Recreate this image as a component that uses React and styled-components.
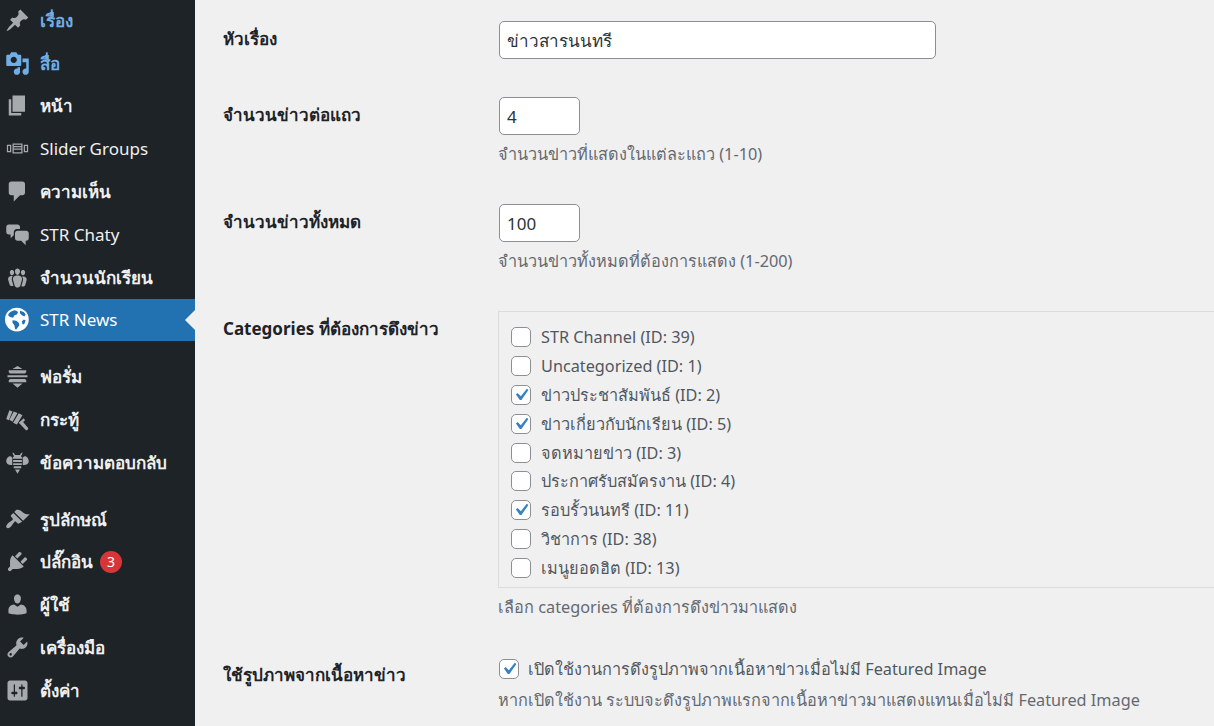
import React from 'react';
import styled, { createGlobalStyle } from 'styled-components';

const Global = createGlobalStyle`
  html, body { margin: 0; padding: 0; height: 100%; overflow: hidden; background: #f0f0f1; }
  body { font-family: "Noto Sans", "Open Sans", "DejaVu Sans", sans-serif; }
  * { box-sizing: border-box; }
`;

const Page = styled.div`
  display: flex;
  width: 1214px;
  height: 726px;
  overflow: hidden;
`;
const Sidebar = styled.nav`
  flex: 0 0 195px;
  background: #1d2327;
  height: 100%;
  margin-top: 0;
`;
const Menu = styled.ul`
  list-style: none;
  margin: -1px 0 14px;
  padding: 0;
  & + & { margin-top: 0; }
`;
const Item = styled.li`
  position: relative;
  display: flex;
  align-items: center;
  height: 42.8px;
  font-size: 17px;
  font-weight: ${p => (p.$thai ? 600 : 400)};
  color: ${p => (p.$posts ? '#72aee6' : '#f0f0f1')};
  background: ${p => (p.$active ? '#2271b1' : 'transparent')};
  ${p => p.$active && 'color: #fff;'}
`;
const IconSlot = styled.span`
  flex: 0 0 40px;
  display: flex;
  align-items: center;
  padding-left: 5px;
  color: ${p => p.$color || '#a7aaad'};
`;
const Arrow = styled.span`
  position: absolute;
  right: 0;
  top: 50%;
  margin-top: -10px;
  border: 10px solid transparent;
  border-right-color: #f0f0f1;
  border-left-width: 0;
`;
const Badge = styled.span`
  display: inline-flex;
  align-items: center;
  justify-content: center;
  width: 22px;
  height: 22px;
  margin-left: 7px;
  border-radius: 50%;
  background: #d63638;
  color: #fff;
  font-size: 14px;
  font-weight: 400;
`;
const Main = styled.main`
  flex: 1;
  min-width: 0;
  padding: 2px 0 0 28px;
  overflow: hidden;
`;
const Row = styled.section`
  display: grid;
  grid-template-columns: 275px 1fr;
  padding: 19px 0;
`;
const Label = styled.div`
  font-size: 17px;
  font-weight: 700;
  line-height: 24px;
  color: #1d2327;
  padding-top: ${p => p.$top || '6px'};
`;
const Field = styled.div`
  min-width: 0;
`;
const TextInput = styled.input`
  display: block;
  margin-left: 1px;
  width: ${p => p.$w};
  height: 38px;
  padding: 0 7px;
  border: 1px solid #8c8f94;
  border-radius: 5px;
  background: #fff;
  color: #2c3338;
  font: 400 17px "Noto Sans", "DejaVu Sans", sans-serif;
`;
const Help = styled.p`
  margin: ${p => p.$m || '7px 0 0'};
  font-size: 16.25px;
  line-height: 24px;
  color: #646970;
  white-space: nowrap;
`;
const CatBox = styled.div`
  width: 900px;
  height: 277px;
  border: 1px solid #dcdcde;
  padding: 11px 0 0 12px;
`;
const Check = styled.label`
  display: flex;
  align-items: center;
  gap: 10px;
  height: 28.8px;
  font-size: 16.25px;
  color: #50575e;
  white-space: nowrap;
`;
const Toggle = styled(Check)`
  margin-left: 1px;
  height: 24px;
  gap: 9px;
`;
const Box = styled.span`
  flex: 0 0 20px;
  width: 20px;
  height: 20px;
  border: 1px solid #8c8f94;
  border-radius: 5px;
  background: #fff;
  display: flex;
  color: #3582c4;
`;

const Ico = ({ d, size = 25 }) => (
  <svg width={size} height={size} viewBox="0 0 20 20" fill="currentColor"><path d={d} /></svg>
);

const P = {
  pin: 'M10.44 3.02l1.82-1.82 6.36 6.35-1.83 1.82c-1.05-.68-2.48-.57-3.41.36l-.75.75c-.92.93-1.04 2.35-.35 3.41l-1.83 1.82-2.41-2.41-2.8 2.79c-.42.42-3.38 2.71-3.8 2.29s1.86-3.39 2.28-3.81l2.79-2.79L4.1 9.36l1.83-1.82c1.05.69 2.48.57 3.4-.36l.75-.75c.93-.92 1.05-2.35.36-3.41z',
  media: 'M13 11V4c0-.55-.45-1-1-1h-1.67L9 1H5L3.67 3H2c-.55 0-1 .45-1 1v7c0 .55.45 1 1 1h10c.55 0 1-.45 1-1zM7 4.5c1.38 0 2.5 1.12 2.5 2.5S8.38 9.5 7 9.5 4.5 8.38 4.5 7 5.62 4.5 7 4.5zM14 6h5v10.5c0 1.38-1.12 2.5-2.5 2.5S14 17.88 14 16.5s1.12-2.5 2.5-2.5c.17 0 .34.02.5.05V9h-3V6zm-4 8.05V13h2v3.5c0 1.38-1.12 2.5-2.5 2.5S7 17.88 7 16.5 8.12 14 9.5 14c.17 0 .34.02.5.05z',
  page: 'M6 15V2h10v13H6zm-1 1h8v2H3V5h2v11z',
  slider: 'M6 6h8v8H6zM7 7v1h6V7zm0 2v1h6V9zm0 2v2h6v-2zM1.5 7H5v6H1.500zM15 7h3.500v6H15zM2.500 8v4h1.500V8zM16 8v4h1.500V8z',
  comment: 'M5 2h9c1.1 0 2 .9 2 2v7c0 1.1-.9 2-2 2h-2l-5 5v-5H5c-1.1 0-2-.9-2-2V4c0-1.1.9-2 2-2z',
  chat: 'M3 2h7c1.100 0 2 .9 2 2v1.500H9.500C8.100 5.500 7 6.600 7 8v2.500L4.500 13v-3H3c-1.100 0-2-.9-2-2V4c0-1.100.9-2 2-2zM10 7h7c1 0 2 .9 2 2v4c0 1.100-.9 2-2 2h-.5v3.500L13 15h-3c-1.100 0-2-.9-2-2V9c0-1.100.9-2 2-2z',
  groups: 'M8.030 4.460c-.29 1.280.55 3.460 1.970 3.460 1.410 0 2.250-2.180 1.960-3.460-.22-.98-1.080-1.620-1.960-1.620-.89 0-1.740.64-1.970 1.620zm-4.130.9c-.25 1.080.47 2.930 1.670 2.930s1.920-1.850 1.670-2.930c-.19-.83-.92-1.380-1.670-1.380s-1.480.55-1.670 1.380zm8.860 0c-.25 1.080.47 2.930 1.660 2.930 1.200 0 1.920-1.850 1.670-2.930-.19-.83-.92-1.380-1.670-1.380-.74 0-1.470.55-1.660 1.380zm-.59 11.430l1.250-4.300C14.200 10 12.710 8.470 10 8.470c-2.720 0-4.210 1.530-3.440 4.020l1.260 4.300C8.050 17.510 9 18 10 18c.98 0 1.940-.49 2.170-1.210zm-6.100-7.630c-.49.67-.96 1.830-.42 3.590l1.120 3.790c-.34.2-.77.31-1.200.31-.85 0-1.650-.41-1.850-1.030l-1.070-3.650c-.65-2.110.61-3.410 2.920-3.410.19 0 .35.01.5.03zm7.700 0c.15-.02.31-.03.5-.03 2.310 0 3.570 1.300 2.920 3.410l-1.070 3.650c-.2.62-1 1.030-1.850 1.030-.43 0-.86-.11-1.200-.31l1.120-3.790c.54-1.760.07-2.920-.42-3.590z',
  globe: 'M9.500 0.500a9.500 9.500 0 1 0 0 19 9.500 9.500 0 0 0 0-19zM5 3.500l2.500-1 1.500.5 1.500 1-1 2-2 .5-1 2-2.500-.5-1.500-1.500C2.800 5.200 3.700 4.200 5 3.500zm7-.5l3 1 1.500 2-1 1.500-2-1-1.500-1.500zM6 10.500l3 .5 2 1.500 .5 2-1.500 2-1 1.500-1-.5-.5-3-1.500-2zm9-.5l1.500 .5-1 3-1.500 .5-.5-2.500z',
  hive: 'M10 1.500l4 2.500H6zM3 5h14v1.500l-1 1H4l-1-1zM2 9h16v1.500H2zM4 12h12l1 1v1.500H3V13zM6 15.500h8L10 19z',
  hammer: 'M3.500 2.500l2.500 1-3 7-2-1zM7 3.500l3 1.200-4 7-2.500-1.500zM11 5l3 1.500-4.500 7.500-3-1.500zM15 9l-4 3.500 1 1 4.800 5c.8.4 2-.5 1.700-1.700L14.500 12l1.500-1.500z',
  bee: 'M6 2c1 0 1.500 1 2 2h4c.5-1 1-2 2-2-.2 1-.5 2-1.300 3 .8.500 1.300 1.200 1.300 2H6c0-.8.5-1.500 1.300-2C6.500 4 6.200 3 6 2zM4 5c1.300 0 1.800 1 1.800 2.500V12C3 12.500 1 11 1 9c0-2 1.500-4 3-4zm12 0c1.500 0 3 2 3 4 0 2-2 3.500-4.800 3V7.500C14.200 6 14.700 5 16 5zM6.500 8h7v1.500h-7zm0 2.500h7V12h-7zM7 13h6v1.500H7zM8 15.500h4L10 19z',
  brush: 'M14.480 11.060L7.410 3.990l1.500-1.500c.5-.56 2.300-.47 3.510.32 1.210.8 1.430 1.280 2.910 2.100 1.180.64 2.450 1.260 4.450.85zm-.71.71L6.700 4.700 4.930 6.470c-.39.39-.39 1.020 0 1.410l1.060 1.060c.39.39.39 1.030 0 1.420-.6.6-1.430 1.150-2.210 1.700-.79.560-1.500 1.100-2 1.700-.85.95-1.100 2.200-.45 2.850.65.650 1.850.4 2.800-.45.6-.5 1.150-1.200 1.700-2 .55-.8 1.100-1.600 1.700-2.200.39-.39 1.030-.39 1.420 0l1.060 1.060c.39.39 1.020.39 1.410 0z',
  plug: 'M13.110 4.360L9.870 7.600 8 5.730l3.240-3.240c.35-.34 1.050-.2 1.560.32.52.51.66 1.210.31 1.550zm-8 1.770l.91-1.120 9.010 9.010-1.190.84c-.71.71-2.630 1.160-3.820 1.160H6.140L4.900 17.260c-.59.59-1.540.59-2.120 0-.59-.58-.59-1.530 0-2.120l1.240-1.240v-3.880c0-1.130.4-3.190 1.090-3.890zm7.260 3.970l3.240-3.240c.34-.35 1.040-.21 1.550.31.52.51.66 1.210.31 1.550l-3.240 3.250z',
  users: 'M10 9.250c-2.270 0-2.730-3.440-2.730-3.440C7 4.020 7.820 2 9.970 2c2.160 0 2.980 2.020 2.710 3.810 0 0-.41 3.440-2.680 3.440zm0 2.570L12.720 10c2.390 0 4.520 2.330 4.520 4.530v2.490s-3.650 1.130-7.240 1.130c-3.650 0-7.240-1.130-7.240-1.130v-2.490c0-2.250 1.940-4.480 4.470-4.480z',
  tools: 'M16.680 9.770c-1.340 1.340-3.300 1.670-4.950.99l-5.410 6.520c-.99.99-2.590.99-3.580 0s-.99-2.590 0-3.570l6.520-5.420c-.68-1.650-.35-3.610.99-4.950 1.280-1.280 3.120-1.620 4.720-1.060l-2.890 2.890 2.820 2.820 2.860-2.870c.53 1.580.18 3.390-1.080 4.650zM3.810 16.210c.4.39 1.040.39 1.430 0 .4-.4.4-1.040 0-1.430-.39-.4-1.030-.4-1.430 0-.39.39-.39 1.030 0 1.430z',
  settings: 'M18 16V4c0-1.100-.9-2-2-2H4c-1.100 0-2 .9-2 2v12c0 1.100.9 2 2 2h12c1.100 0 2-.9 2-2zM8 11h1c.55 0 1 .45 1 1s-.45 1-1 1H8v1.500c0 .28-.22.5-.5.5s-.5-.22-.5-.5V13H6c-.55 0-1-.45-1-1s.45-1 1-1h1V5.500c0-.28.22-.5.5-.5s.5.22.5.5V11zm5-2h-1c-.55 0-1-.45-1-1s.45-1 1-1h1V5.500c0-.28.22-.5.5-.5s.5.22.5.5V7h1c.55 0 1 .45 1 1s-.45 1-1 1h-1v5.500c0 .28-.22.5-.5.5s-.5-.22-.5-.5V9z',
};

const Tick = () => (
  <svg width="24" height="24" viewBox="0 0 20 20" fill="currentColor" style={{ margin: '-3px' }}>
    <path d="M14.830 4.890l1.340.94-5.810 8.380H9.020L5.780 9.670l1.340-1.250 2.770 2.580z" />
  </svg>
);

const groups = [
  [
    { t: 'เรื่อง', i: P.pin, thai: 1, posts: 1 },
    { t: 'สื่อ', i: P.media, thai: 1, posts: 1, c: '#72aee6' },
    { t: 'หน้า', i: P.page, thai: 1 },
    { t: 'Slider Groups', i: P.slider },
    { t: 'ความเห็น', i: P.comment, thai: 1 },
    { t: 'STR Chaty', i: P.chat },
    { t: 'จำนวนนักเรียน', i: P.groups, thai: 1 },
    { t: 'STR News', i: P.globe, active: 1, c: '#fff' },
  ],
  [
    { t: 'ฟอรั่ม', i: P.hive, thai: 1 },
    { t: 'กระทู้', i: P.hammer, thai: 1 },
    { t: 'ข้อความตอบกลับ', i: P.bee, thai: 1 },
  ],
  [
    { t: 'รูปลักษณ์', i: P.brush, thai: 1 },
    { t: 'ปลั๊กอิน', i: P.plug, thai: 1, badge: 3 },
    { t: 'ผู้ใช้', i: P.users, thai: 1 },
    { t: 'เครื่องมือ', i: P.tools, thai: 1 },
    { t: 'ตั้งค่า', i: P.settings, thai: 1 },
  ],
];

const cats = [
  ['STR Channel (ID: 39)', 0],
  ['Uncategorized (ID: 1)', 0],
  ['ข่าวประชาสัมพันธ์ (ID: 2)', 1],
  ['ข่าวเกี่ยวกับนักเรียน (ID: 5)', 1],
  ['จดหมายข่าว (ID: 3)', 0],
  ['ประกาศรับสมัครงาน (ID: 4)', 0],
  ['รอบรั้วนนทรี (ID: 11)', 1],
  ['วิชาการ (ID: 38)', 0],
  ['เมนูยอดฮิต (ID: 13)', 0],
];

export default function App() {
  return (
    <Page>
      <Global />
      <Sidebar>
        {groups.map((g, n) => (
          <Menu key={n}>
            {g.map(m => (
              <Item key={m.t} $thai={m.thai} $posts={m.posts} $active={m.active}>
                <IconSlot $color={m.c}><Ico d={m.i} /></IconSlot>
                {m.t}
                {m.badge && <Badge>{m.badge}</Badge>}
                {m.active && <Arrow />}
              </Item>
            ))}
          </Menu>
        ))}
      </Sidebar>
      <Main>
        <Row>
          <Label>หัวเรื่อง</Label>
          <Field><TextInput $w="437px" defaultValue="ข่าวสารนนทรี" /></Field>
        </Row>
        <Row>
          <Label>จำนวนข่าวต่อแถว</Label>
          <Field>
            <TextInput $w="81px" defaultValue="4" />
            <Help>จำนวนข่าวที่แสดงในแต่ละแถว (1-10)</Help>
          </Field>
        </Row>
        <Row>
          <Label>จำนวนข่าวทั้งหมด</Label>
          <Field>
            <TextInput $w="81px" defaultValue="100" />
            <Help>จำนวนข่าวทั้งหมดที่ต้องการแสดง (1-200)</Help>
          </Field>
        </Row>
        <Row>
          <Label>Categories ที่ต้องการดึงข่าว</Label>
          <Field>
            <CatBox>
              {cats.map(([t, on]) => (
                <Check key={t}><Box>{on ? <Tick /> : null}</Box>{t}</Check>
              ))}
            </CatBox>
            <Help>เลือก categories ที่ต้องการดึงข่าวมาแสดง</Help>
          </Field>
        </Row>
        <Row>
          <Label>ใช้รูปภาพจากเนื้อหาข่าว</Label>
          <Field>
            <Toggle><Box><Tick /></Box>เปิดใช้งานการดึงรูปภาพจากเนื้อหาข่าวเมื่อไม่มี Featured Image</Toggle>
            <Help>หากเปิดใช้งาน ระบบจะดึงรูปภาพแรกจากเนื้อหาข่าวมาแสดงแทนเมื่อไม่มี Featured Image</Help>
          </Field>
        </Row>
      </Main>
    </Page>
  );
}
